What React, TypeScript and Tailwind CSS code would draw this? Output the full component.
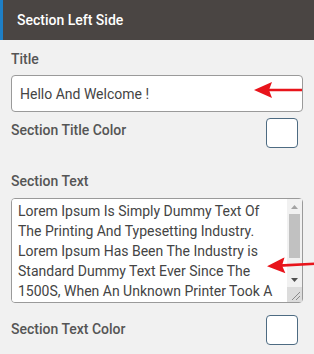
import React from 'react'

function RedArrow({ className }: { className?: string }) {
  return (
    <svg className={className} width="48" height="16" viewBox="0 0 48 16">
      <line x1="12" y1="8" x2="48" y2="8" stroke="#e8141b" strokeWidth="2.6" />
      <polygon points="0,8 18,0 15,8 18,16" fill="#e8141b" />
    </svg>
  )
}

function FakeScrollbar() {
  return (
    <div className="pointer-events-none absolute bottom-[1px] right-[1px] top-[1px] flex w-[15px] flex-col bg-[#f1f1f1]">
      <div className="flex h-[15px] items-center justify-center">
        <svg width="7" height="4" viewBox="0 0 7 4">
          <polygon points="0,4 3.5,0 7,4" fill="#a3a3a3" />
        </svg>
      </div>
      <div className="flex-1 px-[2px]">
        <div className="h-[44px] w-full bg-[#c1c1c1]" />
      </div>
      <div className="flex h-[15px] items-center justify-center">
        <svg width="7" height="4" viewBox="0 0 7 4">
          <polygon points="0,0 3.5,4 7,0" fill="#505050" />
        </svg>
      </div>
      <div className="relative h-[15px] bg-[#dcdcdc]">
        <svg className="absolute bottom-[2px] right-[2px]" width="9" height="9" viewBox="0 0 9 9">
          <line x1="1" y1="9" x2="9" y2="1" stroke="#8a8a8a" strokeWidth="1" />
          <line x1="5" y1="9" x2="9" y2="5" stroke="#8a8a8a" strokeWidth="1" />
        </svg>
      </div>
    </div>
  )
}

export default function App() {
  const text =
    'Lorem Ipsum Is Simply Dummy Text Of The Printing And Typesetting Industry. Lorem Ipsum Has Been The Industry is Standard Dummy Text Ever Since The 1500S, When An Unknown Printer Took A Galley Of Type And Scrambled It To Make A Type Specimen Book.'

  return (
    <div className="h-[354px] w-[314px] overflow-hidden bg-[#f1f1f1] font-['Roboto',sans-serif]">
      {/* Header */}
      <div className="flex h-10 items-center border-l-[3px] border-[#1e7fc6] bg-[#4a4543] pl-[14px]">
        <span className="text-[14px] font-medium text-white">Section Left Side</span>
      </div>

      <div className="px-[11px] pt-[9px]">
        <div className="text-[14px] font-medium leading-5 text-[#555]">Title</div>

        <div className="relative mt-[6px]">
          <input
            readOnly
            value="Hello And Welcome !"
            className="h-[37px] w-full rounded-[4px] border border-[#9a9a9a] bg-white px-2 font-['Roboto',sans-serif] text-[14px] text-[#444] outline-none"
          />
          <RedArrow className="absolute right-[1px] top-[7px]" />
        </div>

        <div className="mt-[6px] flex items-start justify-between pr-[5px]">
          <span className="mt-[2px] text-[14px] font-medium text-[#555]">Section Title Color</span>
          <div className="h-[30px] w-[32px] rounded-[4px] border border-[#4d6b82] bg-white" />
        </div>

        <div className="mt-[23px] text-[14px] font-medium leading-5 text-[#555]">Section Text</div>

        <div className="relative mt-[7px]">
          <textarea
            readOnly
            value={text}
            className="block h-[105px] w-full resize-none overflow-y-scroll rounded-[4px] border border-[#9a9a9a] bg-white py-[2px] pl-[6px] pr-[21px] font-['Roboto',sans-serif] text-[14px] leading-[20px] text-[#444] outline-none [scrollbar-width:none]"
          />
          <FakeScrollbar />
          <RedArrow className="absolute right-[-12px] top-[59px] rotate-[-3deg]" />
        </div>

        <div className="mt-[12px] flex items-start justify-between pr-[5px]">
          <span className="mt-[4px] text-[14px] font-medium text-[#555]">Section Text Color</span>
          <div className="h-[30px] w-[32px] rounded-[4px] border border-[#4d6b82] bg-white" />
        </div>
      </div>
    </div>
  )
}
